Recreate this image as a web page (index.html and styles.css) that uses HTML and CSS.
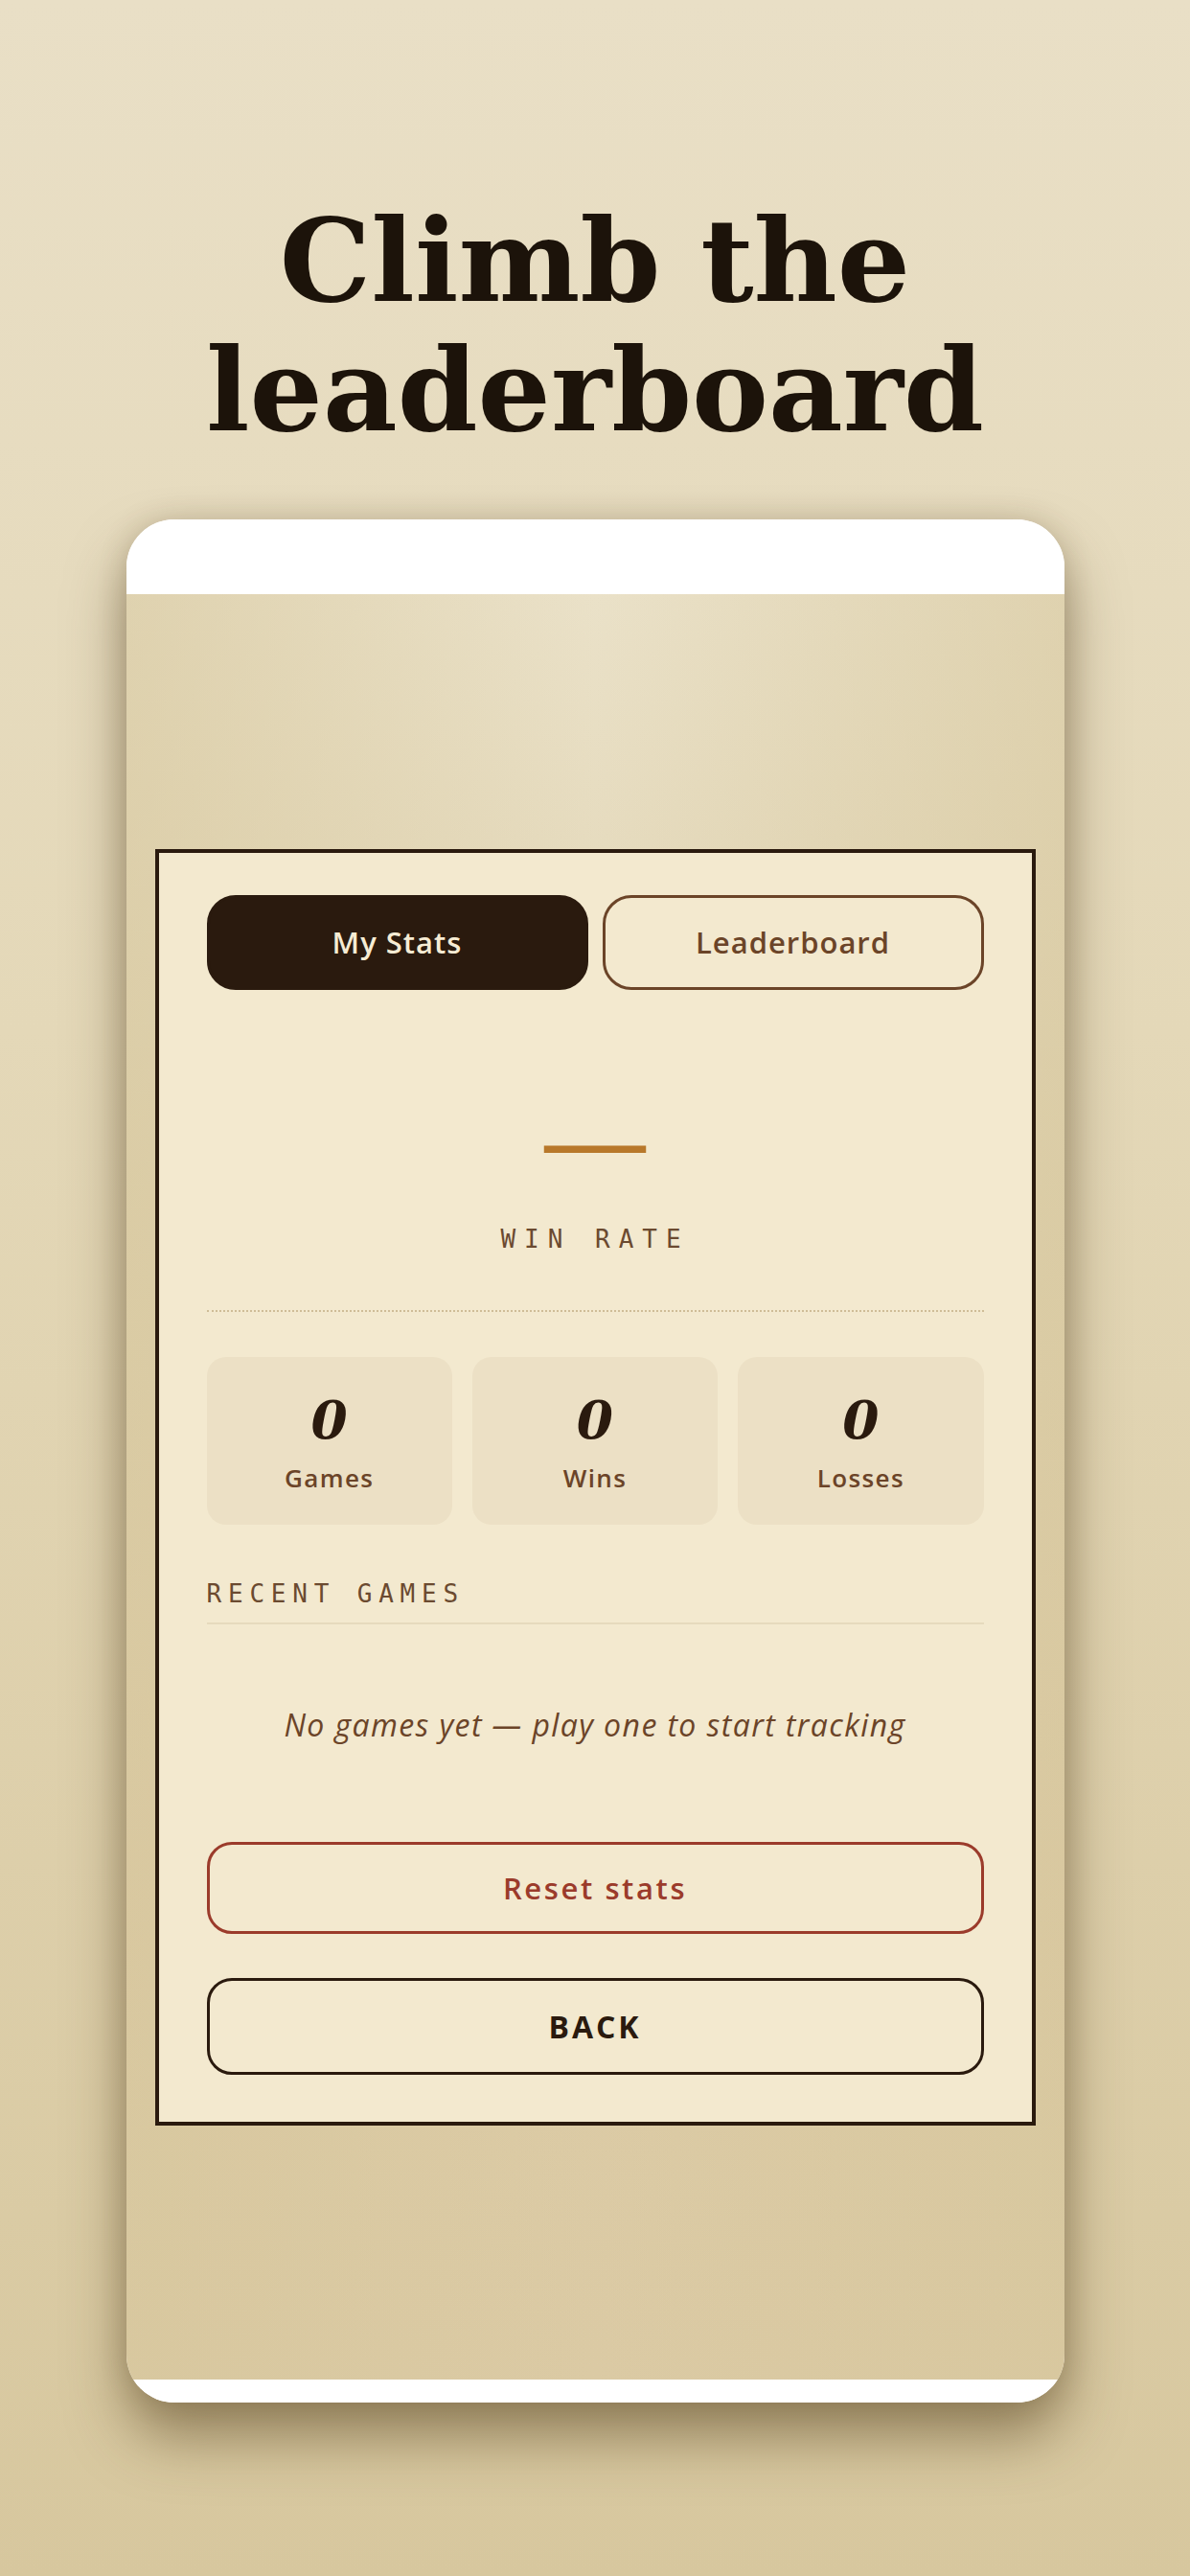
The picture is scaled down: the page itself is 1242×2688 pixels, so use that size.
FILE: index.html
```html
<!DOCTYPE html>
<html lang="en">
<head>
    <meta charset="UTF-8">
    <meta name="viewport" content="width=device-width, initial-scale=1.0">
    <title>Climb the leaderboard</title>
    <link rel="stylesheet" href="styles.css">
</head>
<body>
    <h1 class="headline">Climb the<br>leaderboard</h1>

    <div class="phone">
        <div class="status-bar"></div>

        <div class="screen">
            <div class="stats-card">
                <div class="tabs">
                    <button class="tab active">My Stats</button>
                    <button class="tab">Leaderboard</button>
                </div>

                <div class="rate-value">—</div>
                <div class="rate-label">WIN RATE</div>

                <div class="rule-dotted"></div>

                <div class="stat-grid">
                    <div class="stat-box">
                        <div class="stat-num">0</div>
                        <div class="stat-name">Games</div>
                    </div>
                    <div class="stat-box">
                        <div class="stat-num">0</div>
                        <div class="stat-name">Wins</div>
                    </div>
                    <div class="stat-box">
                        <div class="stat-num">0</div>
                        <div class="stat-name">Losses</div>
                    </div>
                </div>

                <div class="section-title">RECENT GAMES</div>
                <p class="empty">No games yet — play one to start tracking</p>

                <button class="btn btn-reset">Reset stats</button>
                <button class="btn btn-back">BACK</button>
            </div>
        </div>

        <div class="home-bar"></div>
    </div>
</body>
</html>
```

FILE: styles.css
```css
body {
    margin: 0;
    padding-top: 204px;
    min-height: 2688px;
    box-sizing: border-box;
    background: linear-gradient(180deg, #e9dfc6 0%, #e4d8b8 40%, #d7c79e 100%);
    font-family: "Open Sans", "DejaVu Sans", sans-serif;
    color: #2a1a0e;
}

.headline {
    margin: 0 0 68px;
    font-family: "DejaVu Serif", serif;
    font-weight: bold;
    font-size: 120px;
    line-height: 135px;
    text-align: center;
    color: #1c130a;
}

/* device frame */
.phone {
    width: 979px;
    height: 1965px;
    margin: 0 auto;
    display: flex;
    flex-direction: column;
    border-radius: 50px;
    overflow: hidden;
    background: #fff;
    box-shadow: 0 36px 60px rgba(80, 60, 25, 0.5), 0 0 30px rgba(80, 60, 25, 0.2);
}

.status-bar {
    height: 78px;
    background: #fff;
}

.home-bar {
    height: 24px;
    background: #fff;
}

.screen {
    flex: 1;
    display: flex;
    align-items: center;
    justify-content: center;
    background:
        linear-gradient(90deg, rgba(214, 198, 155, 0.55) 0%, rgba(236, 228, 206, 0) 50%, rgba(214, 198, 155, 0.55) 100%),
        linear-gradient(180deg, #eae1c8 0%, #e0d3b1 35%, #dccba6 70%, #dbcaa4 100%);
}

/* stats panel */
.stats-card {
    width: 919px;
    box-sizing: border-box;
    padding: 44px 50px 49px;
    background: #f3e9cf;
    border: 4px solid #2a1a0e;
    display: flex;
    flex-direction: column;
}

.tabs {
    display: flex;
    gap: 15px;
}

button {
    font-family: "Open Sans", "DejaVu Sans", sans-serif;
    cursor: pointer;
}

.tab {
    flex: 1;
    height: 99px;
    border: 3px solid #6b4428;
    border-radius: 30px;
    background: transparent;
    color: #6b4428;
    font-size: 31px;
    font-weight: 600;
    letter-spacing: 1px;
}

.tab.active {
    background: #2a1a0e;
    border-color: #2a1a0e;
    color: #f6ecd4;
}

.rate-value {
    margin-top: 103px;
    height: 104px;
    font-family: "Liberation Serif", serif;
    font-weight: bold;
    font-size: 105px;
    line-height: 1;
    text-align: center;
    color: #b8782a;
}

.rate-label,
.section-title {
    font-family: "DejaVu Sans Mono", monospace;
    font-size: 26px;
    line-height: 1;
    color: #6b4a30;
}

.rate-label {
    margin-top: 40px;
    text-align: center;
    letter-spacing: 9px;
}

.rule-dotted {
    margin-top: 61px;
    border-top: 2px dotted #cfbd97;
}

.stat-grid {
    margin-top: 47px;
    display: grid;
    grid-template-columns: repeat(3, 1fr);
    gap: 21px;
}

.stat-box {
    height: 175px;
    box-sizing: border-box;
    padding-top: 38px;
    border-radius: 20px;
    background: #ece0c5;
    text-align: center;
}

.stat-num {
    font-family: "DejaVu Serif", serif;
    font-weight: bold;
    font-style: italic;
    font-size: 55px;
    line-height: 1;
    color: #2a1a0e;
}

.stat-name {
    margin-top: 20px;
    font-size: 26px;
    font-weight: 600;
    line-height: 1;
    letter-spacing: 1.4px;
    color: #6b4428;
}

.section-title {
    margin-top: 59px;
    padding-bottom: 17px;
    border-bottom: 2px solid #e6dabd;
    letter-spacing: 6.8px;
}

.empty {
    margin: 89px 0 0;
    font-size: 32px;
    font-style: italic;
    line-height: 1;
    letter-spacing: 1.4px;
    text-align: center;
    color: #6b4428;
}

.btn {
    width: 100%;
    background: transparent;
    border: 3px solid;
    border-radius: 26px;
    font-size: 31px;
    font-weight: 600;
}

.btn-reset {
    margin-top: 106px;
    height: 96px;
    border-color: #9b3b2b;
    color: #9b3b2b;
    letter-spacing: 2.6px;
}

.btn-back {
    margin-top: 46px;
    height: 101px;
    border-color: #2a1a0e;
    color: #2a1a0e;
    font-size: 32px;
    font-weight: 700;
    letter-spacing: 3px;
}
```
